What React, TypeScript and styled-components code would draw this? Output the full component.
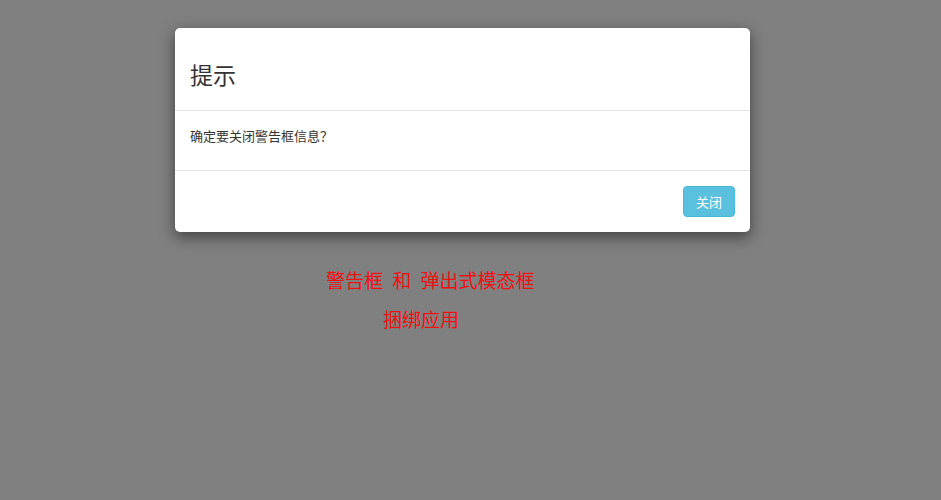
import styled, { createGlobalStyle } from 'styled-components';

const GlobalStyle = createGlobalStyle`
  html, body {
    margin: 0;
    padding: 0;
    background: #808080;
  }
  body {
    font-family: "Noto Sans CJK SC", "Noto Sans", sans-serif;
    color: #333;
  }
`;

const Page = styled.div`
  width: 941px;
  height: 500px;
  background: #808080;
  display: flex;
  flex-direction: column;
  padding-top: 28px;
  box-sizing: border-box;
  overflow: hidden;
`;

const Modal = styled.div`
  width: 575px;
  margin-left: 175px;
  background: #fff;
  border-radius: 5px;
  box-shadow: 0 5px 15px rgba(0, 0, 0, 0.5);
  display: flex;
  flex-direction: column;
`;

const Header = styled.div`
  padding: 29px 15px 19px;
  border-bottom: 1px solid #e5e5e5;
`;

const Title = styled.h4`
  margin: 0;
  font-size: 23px;
  font-weight: 400;
  line-height: 34px;
  color: #333;
`;

const Body = styled.div`
  padding: 15px;
`;

const Message = styled.p`
  margin: 0 0 10px;
  font-size: 13px;
  line-height: 19px;
  color: #333;
`;

const Footer = styled.div`
  padding: 15px;
  border-top: 1px solid #e5e5e5;
  display: flex;
  justify-content: flex-end;
`;

const Button = styled.button`
  font-family: inherit;
  font-size: 13px;
  line-height: 17px;
  padding: 6px 12px;
  color: #fff;
  background: #5bc0de;
  border: 1px solid #46b8da;
  border-radius: 4px;
  cursor: pointer;
`;

const Notes = styled.div`
  margin-top: 35px;
  display: flex;
  flex-direction: column;
  gap: 13px;
`;

const Note = styled.div<{ $indent: number }>`
  margin-left: ${(p) => p.$indent}px;
  color: #ee1111;
  font-size: 19px;
  line-height: 26px;
  white-space: pre;
  word-spacing: 5px;
`;

export default function App() {
  return (
    <>
      <GlobalStyle />
      <Page>
        <Modal>
          <Header>
            <Title>提示</Title>
          </Header>
          <Body>
            <Message>确定要关闭警告框信息？</Message>
          </Body>
          <Footer>
            <Button>关闭</Button>
          </Footer>
        </Modal>
        <Notes>
          <Note $indent={326}>警告框 和 弹出式模态框</Note>
          <Note $indent={383}>捆绑应用</Note>
        </Notes>
      </Page>
    </>
  );
}
